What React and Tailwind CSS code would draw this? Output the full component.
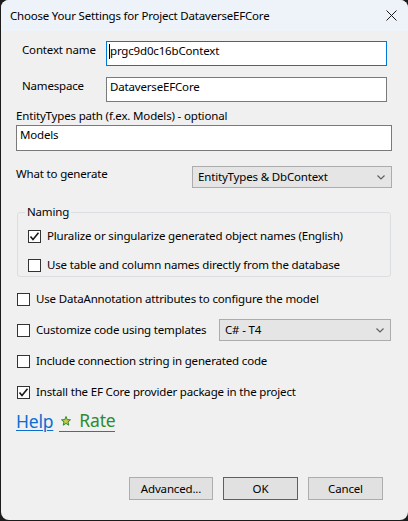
import React from "react";

function Check({ checked }) {
  return (
    <span className="w-[13px] h-[13px] shrink-0 border border-[#333333] bg-white flex items-center justify-center">
      {checked && (
        <svg width="11" height="11" viewBox="0 0 11 11">
          <path d="M1.5 5.5 L4 8.5 L9.5 1.8" fill="none" stroke="#1a1a1a" strokeWidth="1.6" />
        </svg>
      )}
    </span>
  );
}

function Chevron() {
  return (
    <svg width="8" height="5" viewBox="0 0 8 5" className="shrink-0">
      <path d="M0.5 0.5 L4 4 L7.5 0.5" fill="none" stroke="#606060" strokeWidth="1.2" />
    </svg>
  );
}

function Select({ value, className }) {
  return (
    <div className={"border border-[#acacac] bg-[#e5e5e5] flex items-center justify-between pl-[5px] pr-[6px] " + className}>
      <span className="whitespace-nowrap">{value}</span>
      <Chevron />
    </div>
  );
}

function Btn({ children, primary }) {
  return (
    <div
      className={
        "w-[75px] h-[23px] flex items-center justify-center bg-[#e1e1e1] border " +
        (primary ? "border-[#0078d7]" : "border-[#adadad]")
      }
    >
      {children}
    </div>
  );
}

export default function App() {
  return (
    <div className="w-[408px] h-[521px] bg-[#1c1c1c] font-['Segoe_UI','Noto_Sans',sans-serif] text-[11.5px] tracking-[-0.17px] leading-[16px] text-black whitespace-nowrap">
      <div className="ml-px w-[407px] h-[520px] rounded-[8px] bg-[#f0f0f0] overflow-hidden flex flex-col">
        {/* title bar */}
        <div className="h-[31px] bg-[#eef3f9] flex items-center justify-between pl-[9px] pr-[11px] shrink-0">
          <span className="text-[11.5px] tracking-[-0.2px]">Choose Your Settings for Project DataverseEFCore</span>
          <svg width="11" height="11" viewBox="0 0 11 11">
            <path d="M0.5 0.5 L10.5 10.5 M10.5 0.5 L0.5 10.5" stroke="#1a1a1a" strokeWidth="1" />
          </svg>
        </div>

        {/* Context name */}
        <div className="mt-[10px] h-[25px] flex items-start">
          <span className="ml-[21px] w-[84px] pt-[1px]">Context name</span>
          <div className="w-[281px] h-[25px] bg-white border border-[#0078d7] pl-[2px] pt-[1px] flex items-start">
            <span className="w-px h-[15px] bg-black mt-[1px]"></span>
            <span>prgc9d0c16bContext</span>
          </div>
        </div>

        {/* Namespace */}
        <div className="mt-[11px] h-[25px] flex items-start">
          <span className="ml-[21px] w-[84px] pt-[1px]">Namespace</span>
          <div className="w-[281px] h-[25px] bg-white border border-[#7a7a7a] pl-[3px] pt-[1px]">
            DataverseEFCore
          </div>
        </div>

        {/* EntityTypes path */}
        <div className="mt-[6px] ml-[15px]">EntityTypes path (f.ex. Models) - optional</div>
        <div className="mt-[1px] ml-[15px] w-[376px] h-[26px] bg-white border border-[#7a7a7a] pl-[3px] pt-[1px]">
          Models
        </div>

        {/* What to generate */}
        <div className="mt-[15px] h-[22px] flex items-start">
          <span className="ml-[15px] w-[176px] pt-[0px]">What to generate</span>
          <Select value="EntityTypes & DbContext" className="w-[200px] h-[22px]" />
        </div>

        {/* Naming group */}
        <div className="relative mt-[24px] ml-[16px] w-[374px] h-[65px] border border-[#dadee3] rounded-[3px]">
          <span className="absolute -top-[9px] left-[7px] px-[2px] bg-[#f0f0f0] leading-[16px]">Naming</span>
          <div className="mt-[15px] ml-[10px] flex items-center gap-[6px]">
            <Check checked />
            <span>Pluralize or singularize generated object names (English)</span>
          </div>
          <div className="mt-[13px] ml-[10px] flex items-center gap-[6px]">
            <Check />
            <span>Use table and column names directly from the database</span>
          </div>
        </div>

        {/* options */}
        <div className="mt-[14px] ml-[16px] flex items-center gap-[6px] h-[16px]">
          <Check />
          <span>Use DataAnnotation attributes to configure the model</span>
        </div>

        <div className="mt-[12px] ml-[16px] flex items-center h-[22px]">
          <Check />
          <span className="ml-[6px] w-[183px]">Customize code using templates</span>
          <Select value="C# - T4" className="w-[172px] h-[22px]" />
        </div>

        <div className="mt-[12px] ml-[16px] flex items-center gap-[6px] h-[16px]">
          <Check />
          <span>Include connection string in generated code</span>
        </div>

        <div className="mt-[15px] ml-[16px] flex items-center gap-[6px] h-[16px]">
          <Check checked />
          <span>Install the EF Core provider package in the project</span>
        </div>

        {/* links */}
        <div className="mt-[10px] ml-[15px] flex items-center text-[17.5px] tracking-[-0.2px] leading-[22px]">
          <span className="text-[#0a6ed1] underline decoration-1 underline-offset-[2px]">Help</span>
          <span className="ml-[6px] text-[#2e8b2e] border-b border-[#2e8b2e] flex items-center leading-[21px]">
            <svg width="10" height="10" viewBox="0 0 10 10" className="ml-[2px] mr-[8px]">
              <path
                d="M5 0.5 L6.2 3.6 L9.5 3.8 L7 5.9 L7.8 9.2 L5 7.4 L2.2 9.2 L3 5.9 L0.5 3.8 L3.8 3.6 Z"
                fill="#c8c84a"
                stroke="#2e8b2e"
                strokeWidth="1"
              />
            </svg>
            Rate
          </span>
        </div>

        {/* buttons */}
        <div className="mt-auto mb-[20px] mr-[25px] flex justify-end gap-[10px]">
          <div className="w-[84px] h-[23px] flex items-center justify-center bg-[#e1e1e1] border border-[#adadad]">
            Advanced...
          </div>
          <Btn primary>OK</Btn>
          <Btn>Cancel</Btn>
        </div>
      </div>
    </div>
  );
}
